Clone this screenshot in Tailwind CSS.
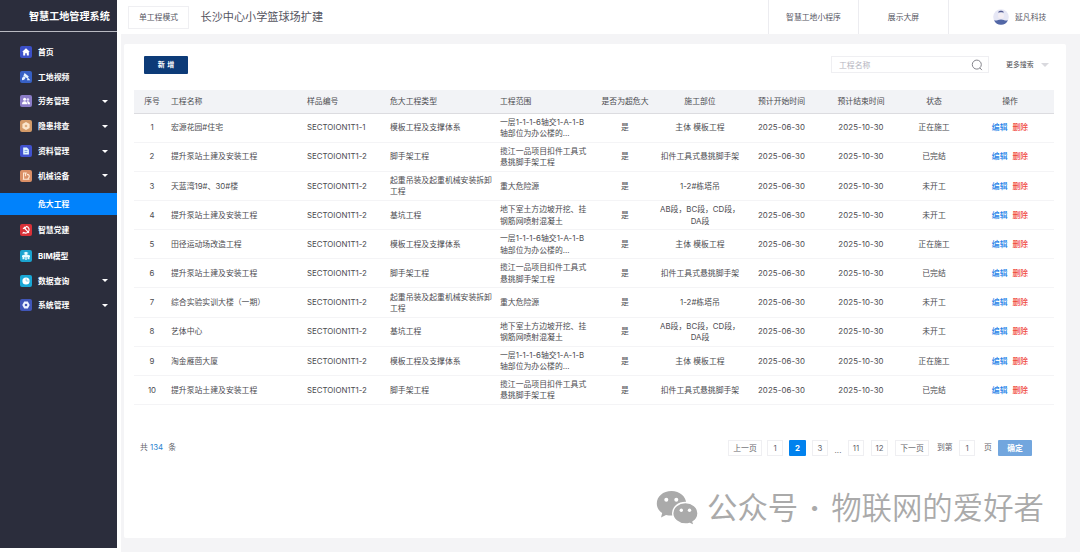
<!DOCTYPE html>
<html lang="zh-CN">
<head>
  <meta charset="UTF-8">
  <meta name="viewport" content="width=device-width, initial-scale=1.0">
  <title>智慧工地管理系统</title>
  <script src="https://cdn.jsdelivr.net/npm/@tailwindcss/browser@4"></script>
</head>
<body class="w-[1080px] h-[552px] overflow-hidden bg-white flex font-['Inter','Noto_Sans_CJK_SC',sans-serif] text-[7.85px] leading-[12px] text-[#4b4b50]">

  <!-- Sidebar -->
  <aside class="w-[117px] h-[548px] shrink-0 bg-[#2b2d3c] text-white font-bold">
    <div class="h-8 border-b border-[#b9bac2] pl-[29px] flex items-center text-[10.1px] whitespace-nowrap">智慧工地管理系统</div>

    <nav class="pt-[7.5px]">
      <a class="h-[24.8px] pl-5 pr-[9px] flex items-center">
        <svg class="w-3 h-3 mr-1.5" viewBox="0 0 12 12"><rect width="12" height="12" rx="2" fill="#3c50c8"/><path d="M6 2.3 2.2 5.8h1v3.7h2V7.2h1.6v2.3h2V5.8h1z" fill="#fff"/></svg>
        首页
      </a>
      <a class="h-[24.8px] pl-5 pr-[9px] flex items-center">
        <svg class="w-3 h-3 mr-1.5" viewBox="0 0 12 12"><rect width="12" height="12" rx="2" fill="#3760c4"/><path d="M4.6 2 8.8 5.600 7.400 7.600 3.400 4.800zM2 9.300V7l1.700-1.700 2 1.400-1.500 2.100zM7.800 6.400l2.600 2.800-3.400.1z" fill="#e4f1ff"/></svg>
        工地视频
      </a>
      <a class="h-[24.8px] pl-5 pr-[9px] flex items-center">
        <svg class="w-3 h-3 mr-1.5" viewBox="0 0 12 12"><rect width="12" height="12" rx="2" fill="#8b7cc8"/><circle cx="4.6" cy="4.3" r="1.5" fill="#fff"/><circle cx="7.9" cy="4.5" r="1.3" fill="#e6e0fa"/><path d="M2 9.2c0-2 1-3 2.6-3s2.5 1 2.5 3zM7.6 9.2c0-1.4-.3-2.2-.8-2.8 1.8-.5 3.2.5 3.2 2.8z" fill="#fff"/></svg>
        劳务管理
        <span class="ml-auto border-x-[3px] border-x-transparent border-t-[3px] border-t-white"></span>
      </a>
      <a class="h-[24.8px] pl-5 pr-[9px] flex items-center">
        <svg class="w-3 h-3 mr-1.5" viewBox="0 0 12 12"><rect width="12" height="12" rx="2" fill="#d39a68"/><path d="m6 2 3.6 2v4L6 10 2.4 8V4z" fill="#fbe6cc"/><circle cx="6" cy="6" r="1.3" fill="#dfae80"/></svg>
        隐患排查
        <span class="ml-auto border-x-[3px] border-x-transparent border-t-[3px] border-t-white"></span>
      </a>
      <a class="h-[24.8px] pl-5 pr-[9px] flex items-center">
        <svg class="w-3 h-3 mr-1.5" viewBox="0 0 12 12"><rect width="12" height="12" rx="2" fill="#4152cf"/><path d="M3.2 2.4h3.7l2 2v5.2H3.2z" fill="#e2f5ff"/><path d="M4.6 5.4h2.8M4.6 7.4h2.8" stroke="#5b86dc" stroke-width=".8"/></svg>
        资料管理
        <span class="ml-auto border-x-[3px] border-x-transparent border-t-[3px] border-t-white"></span>
      </a>
      <a class="h-[24.8px] pl-5 pr-[9px] flex items-center">
        <svg class="w-3 h-3 mr-1.5" viewBox="0 0 12 12"><rect width="12" height="12" rx="2" fill="#da8f66"/><path d="M2.8 9.3h6.6M3.6 9V3h3.2M5.6 3v3.2M7 4.4c2 0 2.4 1 2.2 2.6L7.8 9" fill="none" stroke="#ffe9d6" stroke-width="1.1"/></svg>
        机械设备
        <span class="ml-auto border-x-[3px] border-x-transparent border-t-[3px] border-t-white"></span>
      </a>
      <a class="h-[22px] mt-[4.7px] pl-[38px] flex items-center bg-[#0182fb]">危大工程</a>
      <a class="h-[25px] mt-[2.5px] pl-5 pr-[9px] flex items-center">
        <svg class="w-3 h-3 mr-1.5" viewBox="0 0 12 12"><rect width="12" height="12" rx="2" fill="#d83138"/><path d="M6 2.4c3 .4 4 3.400 2.300 5.400-1.500 1.600-3.500 1.400-5 .4M2.600 9.500l1.200-1.200M3 4.800 5 3l1 1M4.400 4l4.600 4.800" fill="none" stroke="#fff" stroke-width="1.1"/></svg>
        智慧党建
      </a>
      <a class="h-[25px] mt-[1px] pl-5 pr-[9px] flex items-center">
        <svg class="w-3 h-3 mr-1.5" viewBox="0 0 12 12"><rect width="12" height="12" rx="2" fill="#1ba3cf"/><path d="M6 1.800 8.600 3.100 6 4.500 3.400 3.100zM2 5.400 6 4l4 1.400v1.700H2zM5.300 6h1.400v4H5.300zM2.500 7h2v2.200h-2zM7.500 7h2v2.200h-2z" fill="#e9fbff"/></svg>
        BIM模型
      </a>
      <a class="h-[25px] pl-5 pr-[9px] flex items-center">
        <svg class="w-3 h-3 mr-1.5" viewBox="0 0 12 12"><rect width="12" height="12" rx="2" fill="#19a7d6"/><circle cx="6" cy="6" r="3.600" fill="#fff"/><path d="M6.200 3.600V6h2.400" fill="none" stroke="#6cc6e4" stroke-width=".8"/></svg>
        数据查询
        <span class="ml-auto border-x-[3px] border-x-transparent border-t-[3px] border-t-white"></span>
      </a>
      <a class="h-[24px] pl-5 pr-[9px] flex items-center">
        <svg class="w-3 h-3 mr-1.5" viewBox="0 0 12 12"><rect width="12" height="12" rx="2" fill="#4156b8"/><path d="m4.200 2.400h3.600L9.700 6 7.800 9.600H4.200L2.300 6z" fill="#eef3ff"/><circle cx="6" cy="6" r="1.300" fill="#4156b8"/></svg>
        系统管理
        <span class="ml-auto border-x-[3px] border-x-transparent border-t-[3px] border-t-white"></span>
      </a>
    </nav>
  </aside>

  <div class="flex-1 flex flex-col min-w-0">
    <!-- Header -->
    <header class="h-[34px] shrink-0 flex items-center pl-[11px] text-[#55555f]">
      <div class="w-[61px] h-[23px] border border-[#efeff2] flex items-center justify-center">单工程模式</div>
      <h1 class="ml-[11.5px] text-[11.15px]">长沙中心小学篮球场扩建</h1>
      <div class="ml-auto w-[90px] h-[34px] border-l border-[#ececf0] flex items-center justify-center">智慧工地小程序</div>
      <div class="w-[90px] h-[34px] border-l border-[#ececf0] flex items-center justify-center">展示大屏</div>
      <div class="w-[132px] h-[34px] border-l border-[#ececf0] pl-11 flex items-center">
        <svg class="w-4 h-4 mr-1.5" viewBox="0 0 16 16"><circle cx="8" cy="8" r="7.800" fill="#e6e7f5"/><path d="M5 3.600C5.600 1 10.400 1 11 3.600L8 3.200z" fill="#51598f"/><path d="M1 11.200c3 1 4-.8 7-.8s4 1.800 7 .8C13.600 14.300 11 15.800 8 15.800S2.400 14.300 1 11.200z" fill="#5267a6"/><circle cx="8" cy="6.800" r="3" fill="#f3eef4"/></svg>
        延凡科技
      </div>
    </header>

    <div class="flex-1 ml-1 bg-[#f4f4f6] pt-2.5 pl-[3px] pr-3.5 pb-3.5">
      <main class="h-[494px] bg-white rounded-xs pl-2.5 pr-3">
        <!-- Toolbar -->
        <div class="h-[46px] pt-3 pl-2.5 flex items-start">
          <button class="w-11 h-[18px] rounded-[1px] bg-[#0d3b78] text-white text-[7px] font-bold [word-spacing:1px]">新 增</button>
          <div class="ml-auto w-[158px] h-[17px] border border-[#efeff2] pl-[7px] pr-[5px] flex items-center justify-between text-[#b4b4be]">
            工程名称
            <svg class="w-3 h-3" viewBox="0 0 12 12" fill="none" stroke="#77777f" stroke-width=".9"><circle cx="5.800" cy="5.600" r="4.500"/><path d="m8.900 8.900 2 2.200"/></svg>
          </div>
          <div class="w-[65px] h-[18px] pl-[17px] pr-[5px] flex items-center justify-between text-[6.9px]">
            更多搜索
            <span class="border-x-[4px] border-x-transparent border-t-[4px] border-t-[#d9d9de]"></span>
          </div>
        </div>

        <!-- Table -->
        <table class="w-[920px] table-fixed border-collapse text-center">
          <colgroup>
            <col class="w-[36px]"><col class="w-[137px]"><col class="w-[83px]"><col class="w-[110px]"><col class="w-[93px]"><col class="w-[64px]"><col class="w-[86px]"><col class="w-[77px]"><col class="w-[82px]"><col class="w-[64px]"><col class="w-[88px]">
          </colgroup>
          <thead class="bg-[#f2f3f6]">
            <tr class="h-[23px] border-b border-[#dcdce0]">
              <th class="p-0 font-normal">序号</th>
              <th class="p-0 pl-px font-normal text-left">工程名称</th>
              <th class="p-0 font-normal text-left">样品编号</th>
              <th class="p-0 font-normal text-left">危大工程类型</th>
              <th class="p-0 font-normal text-left">工程范围</th>
              <th class="p-0 font-normal">是否为超危大</th>
              <th class="p-0 font-normal">施工部位</th>
              <th class="p-0 font-normal">预计开始时间</th>
              <th class="p-0 font-normal">预计结束时间</th>
              <th class="p-0 font-normal">状态</th>
              <th class="p-0 font-normal">操作</th>
            </tr>
          </thead>
          <tbody id="dataBody"></tbody>
        </table>

        <!-- Pagination -->
        <div class="mt-[35px] pl-1.5 pr-[22px] flex items-start whitespace-nowrap text-[#66666c]">
          <div class="pt-px">共 <span class="text-[#2b83cf]">134</span><span class="ml-[5px]">条</span></div>
          <div class="ml-auto w-[34px] h-4 border border-[#efeff2] flex items-center justify-center">上一页</div>
          <div class="ml-[5px] w-4 h-4 border border-[#efeff2] flex items-center justify-center">1</div>
          <div class="ml-[6px] w-[17px] h-4 rounded-[1px] bg-[#0182ee] text-white font-bold flex items-center justify-center">2</div>
          <div class="ml-[6px] w-4 h-4 border border-[#efeff2] flex items-center justify-center">3</div>
          <div class="w-5 pt-1 text-center">...</div>
          <div class="w-4 h-4 border border-[#efeff2] flex items-center justify-center">11</div>
          <div class="ml-[7px] w-[17px] h-4 border border-[#efeff2] flex items-center justify-center">12</div>
          <div class="ml-[7px] w-[34px] h-4 border border-[#efeff2] flex items-center justify-center">下一页</div>
          <div class="ml-2 w-[22px] pt-px">到第</div>
          <div class="w-4 h-4 border border-[#efeff2] flex items-center justify-center">1</div>
          <div class="ml-[9px] w-3.5 pt-px">页</div>
          <button class="w-[34px] h-4 rounded-[1px] bg-[#72a6de] text-white font-bold">确定</button>
        </div>
      </main>
    </div>
  </div>

  <!-- Watermark -->
  <div class="absolute left-[656px] top-[485px] h-[46px] flex items-center whitespace-nowrap text-[30.4px] leading-[46px] text-[#aaaaaa]">
    <svg class="w-[43px] h-[36px] mr-[8px]" viewBox="0 0 43 36">
      <path d="M15.500 1C7 1 .8 6.500.8 13.500c0 4 2 7.300 5.400 9.600L5 27.500l5-2.600c1.800.5 3.600.7 5.500.7 8.200 0 14.700-5.200 14.700-12.100S23.800 1 15.500 1z" fill="#aaa"/>
      <path d="M29.400 12.500c-7 0-12.700 4.800-12.700 10.700S22.400 34 29.400 34c1.500 0 3-.2 4.300-.6l4.500 2.200-1.200-3.800c3.100-2 5-5 5-8.600 0-5.900-5.600-10.700-12.600-10.700z" fill="#aaa" stroke="#fff" stroke-width="1.400"/>
      <circle cx="10.300" cy="9.800" r="2" fill="#fff"/><circle cx="20.300" cy="9.800" r="2" fill="#fff"/>
      <circle cx="25.300" cy="20.200" r="1.700" fill="#fff"/><circle cx="33.500" cy="20.200" r="1.700" fill="#fff"/>
    </svg>
    <span>公众号</span>
    <span class="w-[33px] text-center font-bold">·</span>
    <span class="font-[350]">物联网的爱好者</span>
  </div>

  <script>
    const names = ["宏源花园#住宅", "提升泵站土建及安装工程", "天蓝湾19#、30#楼", "提升泵站土建及安装工程", "田径运动场改造工程", "提升泵站土建及安装工程", "综合实验实训大楼（一期）", "艺体中心", "淘金雁茴大厦", "提升泵站土建及安装工程"];

    // type, scope, part, status
    const kinds = [
      ["模板工程及支撑体系", "一层1-1-1-6轴交1-A-1-B<br>轴部位为办公楼的...", "主体 模板工程", "正在施工"],
      ["脚手架工程", "揽江一品项目扣件工具式<br>悬挑脚手架工程", "扣件工具式悬挑脚手架", "已完结"],
      ["起重吊装及起重机械安装拆卸<br>工程", "重大危险源", "1-2#栋塔吊", "未开工"],
      ["基坑工程", "地下室土方边坡开挖、挂<br>钢筋网喷射混凝土", "AB段，BC段，CD段，<br>DA段", "未开工"]
    ];

    document.getElementById("dataBody").innerHTML = names.map((name, i) => {
      const [type, scope, part, status] = kinds[i % 4];
      return `<tr class="h-[29.17px] border-b border-[#f4f4f6] leading-[11.5px] whitespace-nowrap">
        <td class="p-0 pt-px">${i + 1}</td>
        <td class="p-0 pt-px pl-px text-left">${name}</td>
        <td class="p-0 pt-px text-left">SECTOION1T1-${i === 0 ? 1 : 2}</td>
        <td class="p-0 pt-px text-left">${type}</td>
        <td class="p-0 pt-px text-left">${scope}</td>
        <td class="p-0 pt-px">是</td>
        <td class="p-0 pt-px">${part}</td>
        <td class="p-0 pt-px tracking-[0.1px]">2025-06-30</td>
        <td class="p-0 pt-px tracking-[0.1px]">2025-10-30</td>
        <td class="p-0 pt-px">${status}</td>
        <td class="p-0 pt-px"><span class="text-[#1a7fe8] font-medium">编辑</span><span class="ml-[5px] text-[#f04a3e] font-medium">删除</span></td>
      </tr>`;
    }).join("");
  </script>
</body>
</html>
